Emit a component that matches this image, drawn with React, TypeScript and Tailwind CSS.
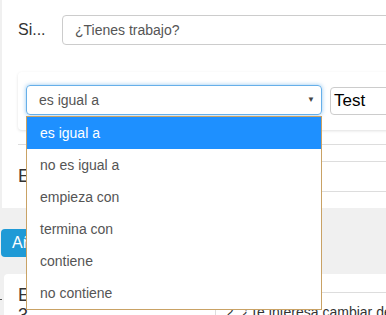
const options = ["es igual a", "no es igual a", "empieza con", "termina con", "contiene", "no contiene"];

export default function App() {
  return (
    <div
      className="relative h-[315px] w-[386px] overflow-hidden bg-[#f0f0f0]"
      style={{ fontFamily: '"Liberation Sans", Arial, sans-serif' }}
    >
      {/* top panel */}
      <div className="ml-[2px] h-[208px] bg-white pl-4">
        <div className="flex items-center pt-[15px]">
          <span className="w-[44px] shrink-0 text-[16px] text-[#333]">Si...</span>
          <div className="flex h-[30px] w-[400px] shrink-0 items-center rounded border border-[#ccc] pl-3 text-[14px] text-[#555]">
            ¿Tienes trabajo?
          </div>
        </div>

        <div className="mt-[27px] flex h-[58px] w-[400px] gap-2 rounded bg-white pl-2 pt-[13px] shadow-[0_1px_3px_rgba(0,0,0,0.12)]">
          <div className="flex h-[30px] w-[296px] shrink-0 items-center justify-between rounded border border-[#66afe9] pl-3 pr-[6px] text-[14px] text-[#555] shadow-[0_0_4px_rgba(102,175,233,0.7)]">
            <span>es igual a</span>
            <span className="text-[8px] text-[#444]">▼</span>
          </div>
          <div className="mt-[2px] flex h-[28px] w-[100px] shrink-0 items-center rounded-sm border border-[#ccc] pl-[3px] text-[17px] text-black">
            Test
          </div>
        </div>

        <div className="mt-[14px] w-[400px] border-t border-[#ddd]" />

        <div className="mt-[16px] flex items-center">
          <span className="w-[40px] shrink-0 text-[18px] text-[#333]">E</span>
          <div className="h-[31px] w-[400px] shrink-0 border-y border-[#ddd]" />
        </div>
      </div>

      {/* button row */}
      <div className="pl-[1px] pt-[21px]">
        <button className="h-[28px] w-[120px] rounded bg-[#1f9ad6] pl-[11px] text-left text-[16px] text-white">
          Añadir
        </button>
      </div>

      {/* bottom panel */}
      <div className="relative ml-[4px] mt-[17px] flex h-[60px] rounded-tl bg-white">
        <span className="absolute -left-[4px] top-[25px] h-[1px] w-[2px] bg-[#555]" />
        <div className="w-[211px] shrink-0 pl-[14px] pt-[11px] text-[18px] leading-[20px] text-[#333]">
          E<br />3
        </div>
        <div className="flex-1 border-l border-[#ddd]">
          <div className="mt-[18px] border-t border-[#ddd] pl-[10px] pt-[9px] text-[14px] whitespace-nowrap text-[#333]">
            2. ¿Te interesa cambiar de trabajo?
          </div>
        </div>
      </div>

      {/* open dropdown */}
      <ul className="absolute left-[26px] top-[116px] w-[296px] border border-[#c9a265] bg-white text-[14px] text-[#555]">
        {options.map((o, i) => (
          <li
            key={o}
            className={`flex h-[32px] items-center pl-[13px] ${i === 0 ? "bg-[#1e90ff] text-white" : ""}`}
          >
            {o}
          </li>
        ))}
      </ul>
    </div>
  );
}
